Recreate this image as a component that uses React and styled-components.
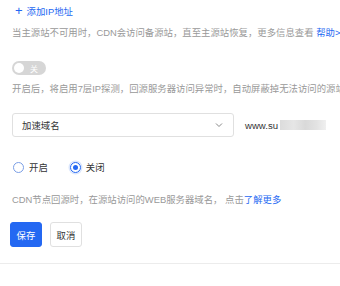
import React from 'react'
import styled, { createGlobalStyle } from 'styled-components'

const GlobalStyle = createGlobalStyle`
  body {
    margin: 0;
    background: #fff;
    font-family: "Liberation Sans", "Noto Sans CJK SC", sans-serif;
  }
`

const Page = styled.div`
  width: 340px;
  height: 286px;
  overflow: hidden;
  box-sizing: border-box;
  padding-left: 12px;
  font-size: 9.4px;
`

const AddLink = styled.div`
  height: 21px;
  display: flex;
  align-items: center;
  gap: 4px;
  padding-left: 3px;
  color: #2468f2;
  cursor: pointer;
`

const Plus = styled.span`
  font-size: 13px;
  font-weight: 300;
  line-height: 1;
  margin-top: -1px;
`

const Tip = styled.div`
  margin-top: ${p => p.$top || 0}px;
  height: 14px;
  line-height: 14px;
  color: #999;
  white-space: nowrap;
`

const Link = styled.a`
  color: #2468f2;
  text-decoration: none;
`

const Toggle = styled.div`
  margin-top: 21px;
  width: 34px;
  height: 14px;
  border-radius: 7px;
  background: #d6d6d6;
  display: flex;
  align-items: center;
  padding: 0 2px;
  box-sizing: border-box;
  gap: 6px;
`

const Knob = styled.span`
  width: 10px;
  height: 10px;
  border-radius: 50%;
  background: #fff;
`

const ToggleText = styled.span`
  color: #fff;
  font-size: 8px;
`

const DomainRow = styled.div`
  margin-top: 17px;
  display: flex;
  align-items: center;
  gap: 11px;
`

const Select = styled.div`
  width: 222px;
  height: 24px;
  box-sizing: border-box;
  border: 1px solid #e0e0e0;
  border-radius: 3px;
  display: flex;
  align-items: center;
  justify-content: space-between;
  padding: 0 9px 0 9px;
  color: #333;
`

const Domain = styled.div`
  display: flex;
  align-items: center;
  color: #333;
  font-size: 9.6px;
`

const Blur = styled.span`
  display: inline-block;
  width: 46px;
  height: 10px;
  margin-left: 2px;
  background: linear-gradient(90deg, #dcdcdc 0%, #e6e6e6 30%, #d9d9d9 55%, #e3e3e3 80%, #f0f0f0 100%);
`

const RadioRow = styled.div`
  margin-top: 23px;
  height: 14px;
  display: flex;
  align-items: center;
  gap: 22px;
  padding-left: 1px;
`

const RadioItem = styled.label`
  display: flex;
  align-items: center;
  gap: 5px;
  color: #333;
`

const RadioCircle = styled.span`
  width: 11px;
  height: 11px;
  box-sizing: border-box;
  border-radius: 50%;
  border: 1px solid ${p => (p.$checked ? '#2468f2' : '#7a9ee6')};
  display: flex;
  align-items: center;
  justify-content: center;
  box-shadow: ${p => (p.$checked ? '0 0 0 1.5px #dbe6fc' : 'none')};

  &::after {
    content: '';
    width: 5px;
    height: 5px;
    border-radius: 50%;
    background: ${p => (p.$checked ? '#2468f2' : 'transparent')};
  }
`

const ButtonRow = styled.div`
  margin-top: 15px;
  margin-left: -2px;
  display: flex;
  gap: 8px;
`

const Button = styled.button`
  width: 32px;
  height: 25px;
  padding: 0;
  border-radius: 3px;
  font-family: inherit;
  font-size: 9.4px;
  border: 1px solid ${p => (p.$primary ? '#2468f2' : '#e0e0e0')};
  background: ${p => (p.$primary ? '#2468f2' : '#fff')};
  color: ${p => (p.$primary ? '#fff' : '#333')};
`

const Divider = styled.div`
  margin-top: 16px;
  margin-left: -12px;
  height: 1px;
  background: #ececec;
`

const Chevron = () => (
  <svg width="10" height="10" viewBox="0 0 10 10">
    <path d="M2 3.5 L5 6.5 L8 3.5" fill="none" stroke="#888" strokeWidth="1" />
  </svg>
)

export default function App() {
  return (
    <>
      <GlobalStyle />
      <Page>
        <AddLink>
          <Plus>+</Plus>
          <span>添加IP地址</span>
        </AddLink>
        <Tip $top={5}>
          当主源站不可用时，CDN会访问备源站，直至主源站恢复，更多信息查看 <Link>帮助&gt;</Link>
        </Tip>
        <Toggle>
          <Knob />
          <ToggleText>关</ToggleText>
        </Toggle>
        <Tip $top={7}>
          开启后，将启用7层IP探测，回源服务器访问异常时，自动屏蔽掉无法访问的源站
        </Tip>
        <DomainRow>
          <Select>
            <span>加速域名</span>
            <Chevron />
          </Select>
          <Domain>
            www.su
            <Blur />
          </Domain>
        </DomainRow>
        <RadioRow>
          <RadioItem>
            <RadioCircle />
            开启
          </RadioItem>
          <RadioItem>
            <RadioCircle $checked />
            关闭
          </RadioItem>
        </RadioRow>
        <Tip $top={19}>
          CDN节点回源时，在源站访问的WEB服务器域名， 点击<Link>了解更多</Link>
        </Tip>
        <ButtonRow>
          <Button $primary>保存</Button>
          <Button>取消</Button>
        </ButtonRow>
        <Divider />
      </Page>
    </>
  )
}
